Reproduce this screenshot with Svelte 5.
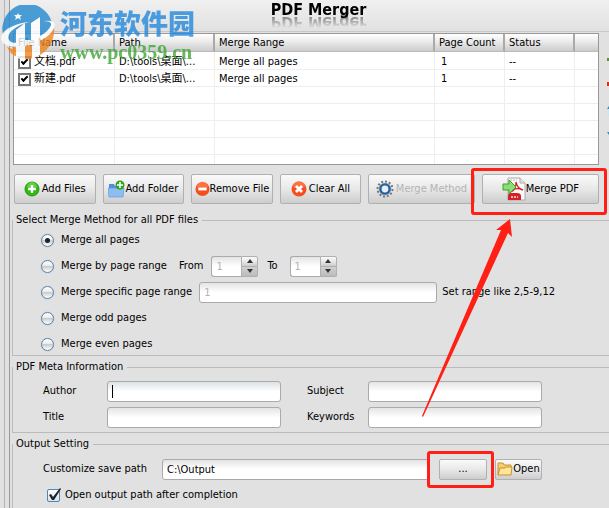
<script lang="ts">
	let files = $state([
		{ name: '文档.pdf', path: 'D:\\tools\\桌面\\...', range: 'Merge all pages', pages: 1, status: '--', checked: true },
		{ name: '新建.pdf', path: 'D:\\tools\\桌面\\...', range: 'Merge all pages', pages: 1, status: '--', checked: true }
	]);
	const emptyRows = [1, 2, 3, 4, 5];

	let method = $state('all');
	let from = $state(1);
	let to = $state(1);
	let specific = $state('1');
	let meta = $state({ author: '', subject: '', title: '', keywords: '' });
	let savePath = $state('C:\\Output');
	let openAfter = $state(true);

	function focusOnMount(node: HTMLInputElement) {
		node.focus();
	}
</script>

{#snippet spinner(id, value)}
	<span class="spinner">
		<input type="text" {id} {value} disabled />
		<span class="spin-buttons">
			<button disabled aria-label="Increase"><svg width="6" height="4"><path d="M3 0L6 4H0z" fill="#333" /></svg></button>
			<button disabled aria-label="Decrease"><svg width="6" height="4"><path d="M3 4L6 0H0z" fill="#333" /></svg></button>
		</span>
	</span>
{/snippet}

<div class="window">
	<div class="nav-edge"></div>
	<main class="panel">
		<header><h1>PDF Merger</h1></header>

		<div class="list-row">
			<div class="list">
				<table>
					<colgroup>
						<col class="c-name" /><col class="c-path" /><col /><col class="c-count" /><col class="c-status" /><col class="c-rest" />
					</colgroup>
					<thead>
						<tr><th>File Name</th><th>Path</th><th>Merge Range</th><th>Page Count</th><th>Status</th><th></th></tr>
					</thead>
					<tbody>
						{#each files as file}
							<tr>
								<td class="name">
									<label><input type="checkbox" class="tick" bind:checked={file.checked} />{file.name}</label>
								</td>
								<td>{file.path}</td>
								<td>{file.range}</td>
								<td class="num">{file.pages}</td>
								<td>{file.status}</td>
								<td></td>
							</tr>
						{/each}
						{#each emptyRows as row}
							<tr><td></td><td></td><td></td><td></td><td></td><td></td></tr>
						{/each}
					</tbody>
				</table>
			</div>
			<div class="side-icons">
				<svg width="3" height="90" viewBox="0 0 3 90">
					<path d="M1 25h2v3h-2z" fill="#5b9530" />
					<path d="M1 49h2v4h-2z" fill="#e3251b" />
					<path d="M1 76l2-3v3z" fill="#2d8fc0" />
					<path d="M1 99l2 3v-3z" fill="#2d8fc0" />
					<path d="M2 77h1v6h-1z" fill="#c5e6f3" />
				</svg>
			</div>
		</div>

		<div class="toolbar">
			<button>
				<svg width="16" height="16" viewBox="0 0 16 16">
					<circle cx="8" cy="8" r="7" fill="#32b816" stroke="#249b0d" />
					<path d="M3 6a5 5 0 0 1 10 0q-5 2-10 0z" fill="#7be05a" opacity=".6" />
					<path d="M8 4v8M4 8h8" stroke="#fff" stroke-width="2.4" />
				</svg>Add Files
			</button>
			<button class="tight">
				<svg width="17" height="18" viewBox="0 0 17 18">
					<path d="M1 4h5l1 2h7v10H1z" fill="#4f8fd8" />
					<path d="M0 8h16l-1 9H1z" fill="#8fbdf0" stroke="#5c9ae0" stroke-width=".7" />
					<circle cx="12" cy="5" r="4.5" fill="#2da51d" />
					<path d="M12 2v6M9 5h6" stroke="#fff" stroke-width="1.6" />
				</svg>Add Folder
			</button>
			<button class="tight">
				<svg width="15" height="16" viewBox="0 0 16 16">
					<circle cx="8" cy="8" r="7.5" fill="#f4501e" />
					<path d="M2 6a6 6 0 0 1 12 0q-6 2-12 0z" fill="#ff8a5c" opacity=".6" />
					<path d="M3.5 8h9" stroke="#fff" stroke-width="3" />
				</svg>Remove File
			</button>
			<button>
				<svg width="16" height="16" viewBox="0 0 16 16">
					<circle cx="8" cy="8" r="7.5" fill="#f4501e" />
					<path d="M2 6a6 6 0 0 1 12 0q-6 2-12 0z" fill="#ff8a5c" opacity=".6" />
					<path d="M5 5l6 6M11 5l-6 6" stroke="#fff" stroke-width="2.8" />
				</svg>Clear All
			</button>
			<button disabled>
				<svg width="18" height="18" viewBox="0 0 18 18">
					<circle cx="9" cy="9" r="7.5" fill="none" stroke="#777" stroke-width="2" stroke-dasharray="2 1.9" />
					<circle cx="9" cy="9" r="6.3" fill="#9a9a9a" />
					<circle cx="9" cy="9" r="4.5" fill="#e9eef2" stroke="#1d63ad" stroke-width="2.2" />
				</svg>Merge Method
			</button>
			<div class="merge marked">
				<button class="tight">
					<svg width="24" height="24" viewBox="0 0 24 24">
						<path d="M6 1h12l5 5v17H6z" fill="#fafafa" stroke="#aaa" />
						<path d="M18 1v5h5" fill="#e4e4e4" stroke="#aaa" />
						<path d="M8 3h7" stroke="#bbb" stroke-dasharray="2 1" />
						<path d="M14 5c1 5 3 7 7 8M14 5c0 5-2 9-5 10M10 13c4-2 7-2 11 0" fill="none" stroke="#dc2424" stroke-width="1.3" />
						<path d="M6 19q0-3 3-3h6q4 0 4 3v4H6z" fill="#d81f26" />
						<path d="M9 20h7" stroke="#f5b5b5" stroke-width="2" stroke-dasharray="2 1" />
						<path d="M1 7h6V3l7 7-7 7v-4H1z" fill="#8edc74" stroke="#3b9f32" />
					</svg>Merge PDF
				</button>
				<svg class="arrow" width="92" height="200" viewBox="0 0 92 200">
					<path d="M89 1L75 12L80 12L1 198L2 199L87 15L91 19z" fill="#ff1f14" />
				</svg>
			</div>
		</div>

		<fieldset class="methods">
			<legend>Select Merge Method for all PDF files</legend>
			<div class="line">
				<label><input type="radio" value="all" bind:group={method} />Merge all pages</label>
			</div>
			<div class="line">
				<label><input type="radio" value="range" bind:group={method} />Merge by page range</label>
				<label class="from" for="from">From</label>
				{@render spinner('from', from)}
				<label class="to" for="to">To</label>
				{@render spinner('to', to)}
			</div>
			<div class="line">
				<label><input type="radio" value="specific" bind:group={method} />Merge specific page range</label>
				<input type="text" class="specific" aria-label="Page range" bind:value={specific} disabled />
				<span class="hint">Set range like 2,5-9,12</span>
			</div>
			<div class="line">
				<label><input type="radio" value="odd" bind:group={method} />Merge odd pages</label>
			</div>
			<div class="line">
				<label><input type="radio" value="even" bind:group={method} />Merge even pages</label>
			</div>
		</fieldset>

		<fieldset class="meta">
			<legend>PDF Meta Information</legend>
			<div class="meta-grid">
				<label for="author">Author</label>
				<input type="text" id="author" placeholder=" " bind:value={meta.author} use:focusOnMount />
				<label for="subject">Subject</label>
				<input type="text" id="subject" bind:value={meta.subject} />
				<label for="title">Title</label>
				<input type="text" id="title" bind:value={meta.title} />
				<label for="keywords">Keywords</label>
				<input type="text" id="keywords" bind:value={meta.keywords} />
			</div>
		</fieldset>

		<fieldset class="output">
			<legend>Output Setting</legend>
			<div class="line save">
				<label for="save-path">Customize save path</label>
				<input type="text" id="save-path" bind:value={savePath} />
				<div class="browse marked"><button>...</button></div>
				<button class="open">
					<svg width="16" height="14" viewBox="0 0 16 14">
						<path d="M1 13V1h5l1 2h7v3" fill="#f5cf74" stroke="#c8912c" />
						<path d="M1 13l2-7h5l1-1h6l-1 8z" fill="#ffe59a" stroke="#c8912c" />
					</svg>Open
				</button>
			</div>
			<div class="line after">
				<label>
					<span class="check">
						<input type="checkbox" bind:checked={openAfter} />
						{#if openAfter}
							<svg width="16" height="16" viewBox="0 0 16 16"><path d="M2 7l2-1 2 3L13 0l1 1L7 12H5z" fill="#222" /></svg>
						{/if}
					</span>Open output path after completion
				</label>
			</div>
		</fieldset>
	</main>

	<div class="watermark">
		<svg width="58" height="58" viewBox="0 0 58 58">
			<path d="M3 30A25 25 0 0 1 52 18C42 13 20 23 3 30z" fill="#2389cf" />
			<path d="M7 42C20 49 44 41 54 20C57 44 34 60 17 52Q10 49 7 42z" fill="#f08420" />
			<path d="M3 35C2 23 20 16 37 15Q53 14 53 21C53 31 28 43 12 42Q4 40 3 35z" fill="#2389cf" />
			<path d="M12 42C30 44 52 32 53 21C58 34 33 50 14 47z" fill="#f08420" />
			<path d="M16 53V25l9-7v17h6V18l9-6v38l-8 4V40h-7v15z" fill="#fff" />
			<path d="M2 36C-2 25 17 18 29 17C14 21 6 29 9 35C13 43 47 33 51 20Q52 16 43 16Q58 14 54 23C47 40 7 48 2 36z" fill="#fff" />
			<path d="M18 8l1 2h3l-2 2 1 3-3-2-3 2 1-3-2-2h3z" fill="#fff" />
		</svg>
		<div>
			<div class="site">河东软件园</div>
			<div class="url">www.pc0359.cn</div>
		</div>
	</div>
</div>

<style>
	:global(body) {
		margin: 0;
		background: #e1e1e1;
	}

	.window {
		position: relative;
		display: flex;
		min-height: 100vh;
		overflow: hidden;
		background: #e1e1e1;
		color: #000;
		font: 11px/16px "DejaVu Sans Condensed", "Noto Sans CJK SC", sans-serif;
	}

	.nav-edge {
		width: 4px;
		border-right: 1px solid #b4b4b4;
		margin-right: 4px;
	}

	.panel {
		flex: 1;
		min-width: 0;
		display: flex;
		flex-direction: column;
		border-left: 1px solid #999;
	}

	header {
		height: 31px;
		border-bottom: 1px solid #c8c8c8;
		background: linear-gradient(#f0f0f0, #e1e1e1);
	}

	h1 {
		margin: 0;
		text-align: center;
		padding-left: 18px;
		font: bold 16px/20px "DejaVu Sans Condensed", sans-serif;
		-webkit-box-reflect: below -8px linear-gradient(transparent 20%, rgba(0, 0, 0, 0.6));
	}

	/* file list */
	.list-row {
		display: flex;
		justify-content: space-between;
		padding: 1px 0 0 3px;
	}

	.list {
		flex: 1;
		height: 130px;
		overflow: hidden;
		border: 1px solid #999;
		background: #fff;
	}

	.side-icons {
		width: 3px;
		margin-left: 7px;
	}

	.side-icons svg {
		display: block;
		overflow: visible;
	}

	table {
		width: 100%;
		table-layout: fixed;
		border-collapse: separate;
		border-spacing: 0;
	}

	.c-name {
		width: 101px;
	}

	.c-path {
		width: 100px;
	}

	.c-count,
	.c-status {
		width: 70px;
	}

	.c-rest {
		width: 23px;
	}

	th {
		height: 17px;
		padding: 0 4px;
		border-right: 2px solid #aaa;
		border-bottom: 1px solid #bbb;
		background: linear-gradient(#fff, #f0f0f0 35%, #ccc);
		font-weight: normal;
		text-align: left;
		line-height: 16px;
		white-space: nowrap;
	}

	td {
		height: 14px;
		padding: 2px 4px 0;
		border-right: 1px solid #eee;
		border-bottom: 1px solid #eee;
		line-height: 14px;
		white-space: nowrap;
		overflow: hidden;
	}

	tbody tr:first-child td {
		padding-top: 3px;
	}

	th:last-child,
	td:last-child {
		border-right: 0;
	}

	.name label {
		display: flex;
		align-items: center;
		gap: 3px;
		height: 14px;
	}

	.num {
		padding-left: 6px;
	}

	.tick {
		appearance: none;
		width: 13px;
		height: 13px;
		margin: 0;
		border: 2px solid #777;
		background: #fff;
	}

	.tick:checked::before {
		content: '';
		display: block;
		width: 7px;
		height: 4px;
		margin: 1px 0 0 1px;
		border: solid #000;
		border-width: 0 0 2px 2px;
		box-sizing: border-box;
		transform: rotate(-45deg);
	}

	/* buttons */
	button {
		display: flex;
		align-items: center;
		justify-content: center;
		box-sizing: border-box;
		padding: 0;
		border: 1px solid #b0b0b0;
		border-radius: 2px;
		background: linear-gradient(#fafafa, #e8e8e8 50%, #cdcdcd);
		color: #000;
		font: inherit;
		white-space: nowrap;
	}

	button:disabled {
		color: #b4b4b4;
	}

	.toolbar {
		display: grid;
		grid-template-columns: repeat(4, 82fr) 107fr 118fr;
		column-gap: 7px;
		padding: 9px 10px 0 4px;
	}

	.toolbar button {
		width: 100%;
		height: 30px;
		gap: 2px;
	}

	.toolbar button.tight {
		gap: 0;
	}

	.toolbar button svg {
		flex: none;
	}

	.marked {
		position: relative;
	}

	.marked::after {
		content: '';
		position: absolute;
		inset: -6px -8px -11px -11px;
		border: 3px solid #ff1f14;
		border-radius: 3px;
		pointer-events: none;
	}

	.browse.marked::after {
		inset: -8px -7px -8px -12px;
	}

	.arrow {
		position: absolute;
		z-index: 2;
		top: 44px;
		left: -61px;
		pointer-events: none;
	}

	/* groups */
	fieldset {
		min-width: 0;
		margin: 3px 0 0 2px;
		padding: 1px 0 0 30px;
		border: 1px solid #bbb;
		border-right: 0;
	}

	legend {
		margin-left: -30px;
		padding: 0 4px 0 3px;
		line-height: 16px;
	}

	.methods {
		display: grid;
		row-gap: 4px;
		margin-top: 8px;
	}

	.methods .line {
		margin-left: -2px;
	}

	.line {
		display: flex;
		align-items: center;
		height: 22px;
	}

	.line label {
		display: flex;
		align-items: center;
		white-space: nowrap;
	}

	input[type='radio'] {
		appearance: none;
		display: grid;
		place-items: center;
		width: 13px;
		height: 13px;
		margin: 0 7px 0 0;
		border: 1px solid #5d87ab;
		border-radius: 50%;
		background: linear-gradient(#fff, #eee 40%, #ccc 50%, #fff);
		box-shadow: 0 0 1px #7fa6c6;
	}

	input[type='radio']:checked::before {
		content: '';
		width: 5px;
		height: 5px;
		border-radius: 50%;
		background: #222;
	}

	input[type='text'] {
		box-sizing: border-box;
		min-width: 0;
		height: 21px;
		padding: 0 4px;
		border: 1px solid #aaa;
		border-radius: 3px;
		background: linear-gradient(#e4e4e4, #fff 50%);
		color: #000;
		font: inherit;
		outline: 0;
	}

	input[type='text']:disabled {
		color: #b4b4b4;
	}

	/* steady caret while the box is empty */
	#author:focus:placeholder-shown {
		caret-color: transparent;
		background: linear-gradient(#000, #000) 4px center / 1px 13px no-repeat, linear-gradient(#dbe2e6, #fff 50%);
	}

	.from {
		margin: 0 8px 0 12px;
	}

	.to {
		margin: 0 12px 0 9px;
	}

	.spinner {
		display: flex;
		width: 47px;
		height: 21px;
	}

	.spinner input[type='text'] {
		flex: 1;
		border-right: 0;
		border-radius: 3px 0 0 3px;
	}

	.spin-buttons {
		display: grid;
		width: 17px;
	}

	.spin-buttons button {
		border-radius: 0 2px 0 0;
	}

	.spin-buttons button:last-child {
		border-top: 0;
		border-radius: 0 0 2px 0;
		background: linear-gradient(#d0d0d0, #bbb);
	}

	.specific {
		flex: 1;
		margin: 0 5px 0 7px;
	}

	.hint {
		padding-right: 54px;
	}

	.meta {
		padding: 5px 67px 4px 30px;
	}

	.meta-grid {
		display: grid;
		grid-template-columns: 64px 200fr 61px 174fr;
		row-gap: 4px;
		align-items: center;
	}

	.meta-grid label {
		line-height: 22px;
	}

	#author,
	#title {
		margin-right: 26px;
	}

	.output {
		flex: 1;
		padding: 6px 67px 0 30px;
		border-bottom: 0;
	}

	.save label {
		width: 119px;
	}

	#save-path {
		flex: 1;
		margin-right: 9px;
	}

	.browse {
		width: 48px;
		margin-right: 8px;
	}

	.browse button {
		width: 100%;
		height: 21px;
	}

	.open {
		width: 47px;
		height: 21px;
	}

	.after {
		margin: 4px 0 0 4px;
	}

	.check {
		position: relative;
		width: 13px;
		height: 13px;
		margin-right: 5px;
	}

	.check input {
		appearance: none;
		display: block;
		box-sizing: border-box;
		width: 13px;
		height: 13px;
		margin: 0;
		border: 1px solid #4f86b4;
		border-radius: 2px;
		background: linear-gradient(#fff, #d5e2ec);
	}

	.check svg {
		position: absolute;
		top: -1px;
		left: 0;
		pointer-events: none;
	}

	/* site mark over the page */
	.watermark {
		position: absolute;
		top: 5px;
		left: 0;
		display: flex;
		gap: 2px;
		opacity: 0.8;
		pointer-events: none;
		white-space: nowrap;
	}

	.site {
		color: #2389dc;
		font: 900 27px/36px "Noto Sans CJK SC", sans-serif;
	}

	.url {
		color: #3fa535;
		font: bold 20px/22px "Liberation Serif", serif;
	}
</style>
